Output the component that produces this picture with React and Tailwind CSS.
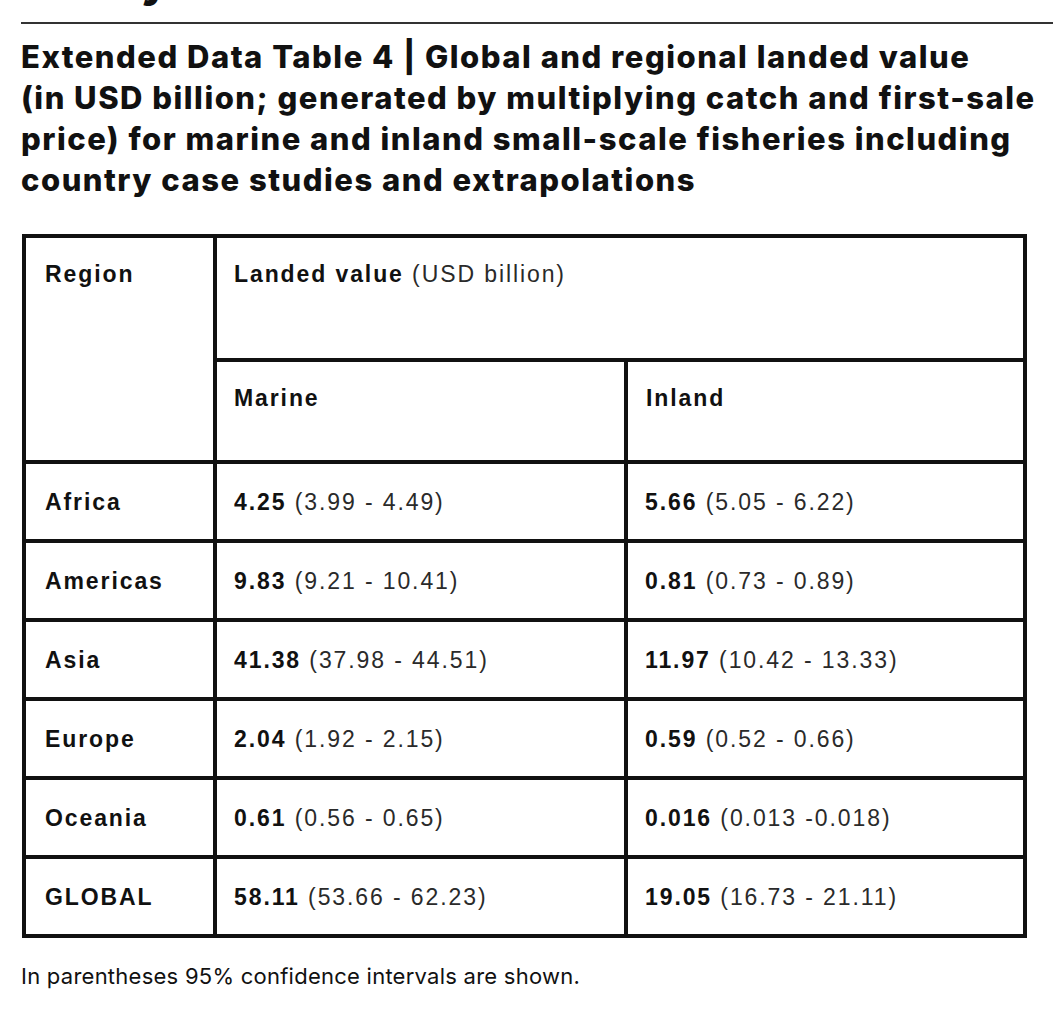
import React from "react";

const rows = [
  { region: "Africa", marine: ["4.25", "(3.99 - 4.49)"], inland: ["5.66", "(5.05 - 6.22)"] },
  { region: "Americas", marine: ["9.83", "(9.21 - 10.41)"], inland: ["0.81", "(0.73 - 0.89)"] },
  { region: "Asia", marine: ["41.38", "(37.98 - 44.51)"], inland: ["11.97", "(10.42 - 13.33)"] },
  { region: "Europe", marine: ["2.04", "(1.92 - 2.15)"], inland: ["0.59", "(0.52 - 0.66)"] },
  { region: "Oceania", marine: ["0.61", "(0.56 - 0.65)"], inland: ["0.016", "(0.013 -0.018)"] },
  { region: "GLOBAL", marine: ["58.11", "(53.66 - 62.23)"], inland: ["19.05", "(16.73 - 21.11)"] },
];

const cellText =
  "font-['Liberation_Sans',Arial,sans-serif] text-[23px] leading-[28px] tracking-[1.9px] text-[#111]";

const Value = ({ v }) => (
  <div className="bg-white flex items-center pl-[17px]">
    <span className={cellText}>
      <span className="font-bold">{v[0]}</span>{" "}
      <span className="text-[#2a2a2a]">{v[1]}</span>
    </span>
  </div>
);

const App = () => {
  return (
    <div className="min-h-[1023px] w-[1053px] bg-white font-['Inter',sans-serif] text-[#111]">
      {/* cut-off heading above */}
      <div className="h-[10px] overflow-hidden">
        <div className="ml-[141px] -mt-[41px] text-[44px] leading-none font-extrabold">y</div>
      </div>

      <div className="ml-[21px] mt-[12px] h-[2px] bg-[#333]" />

      <h1 className="ml-[21px] mt-[12px] text-[31px] leading-[41px] font-extrabold tracking-[1.5px]">
        Extended Data Table 4 | Global and regional landed value
        <br />
        (in USD billion; generated by multiplying catch and first-sale
        <br />
        price) for marine and inland small-scale fisheries including
        <br />
        country case studies and extrapolations
      </h1>

      <div className="ml-[22px] mt-[34px] w-[1005px] grid grid-cols-[187px_407px_395px] grid-rows-[120px_98px_repeat(6,75px)] gap-[4px] p-[4px] bg-[#111]">
        <div className="row-span-2 bg-white pl-[19px] pt-[22px]">
          <span className={`${cellText} font-bold`}>Region</span>
        </div>
        <div className="col-span-2 bg-white pl-[17px] pt-[22px]">
          <span className={cellText}>
            <span className="font-bold">Landed value</span>{" "}
            <span className="text-[#2a2a2a]">(USD billion)</span>
          </span>
        </div>
        <div className="bg-white pl-[17px] pt-[22px]">
          <span className={`${cellText} font-bold`}>Marine</span>
        </div>
        <div className="bg-white pl-[18px] pt-[22px]">
          <span className={`${cellText} font-bold`}>Inland</span>
        </div>

        {rows.map((r) => (
          <React.Fragment key={r.region}>
            <div className="bg-white flex items-center pl-[19px]">
              <span className={`${cellText} font-bold`}>{r.region}</span>
            </div>
            <Value v={r.marine} />
            <Value v={r.inland} />
          </React.Fragment>
        ))}
      </div>

      <p className="ml-[21px] mt-[24px] text-[22px] leading-[28px] text-[#111] tracking-[0.25px]">
        In parentheses 95% confidence intervals are shown.
      </p>
    </div>
  );
};

export default App;
